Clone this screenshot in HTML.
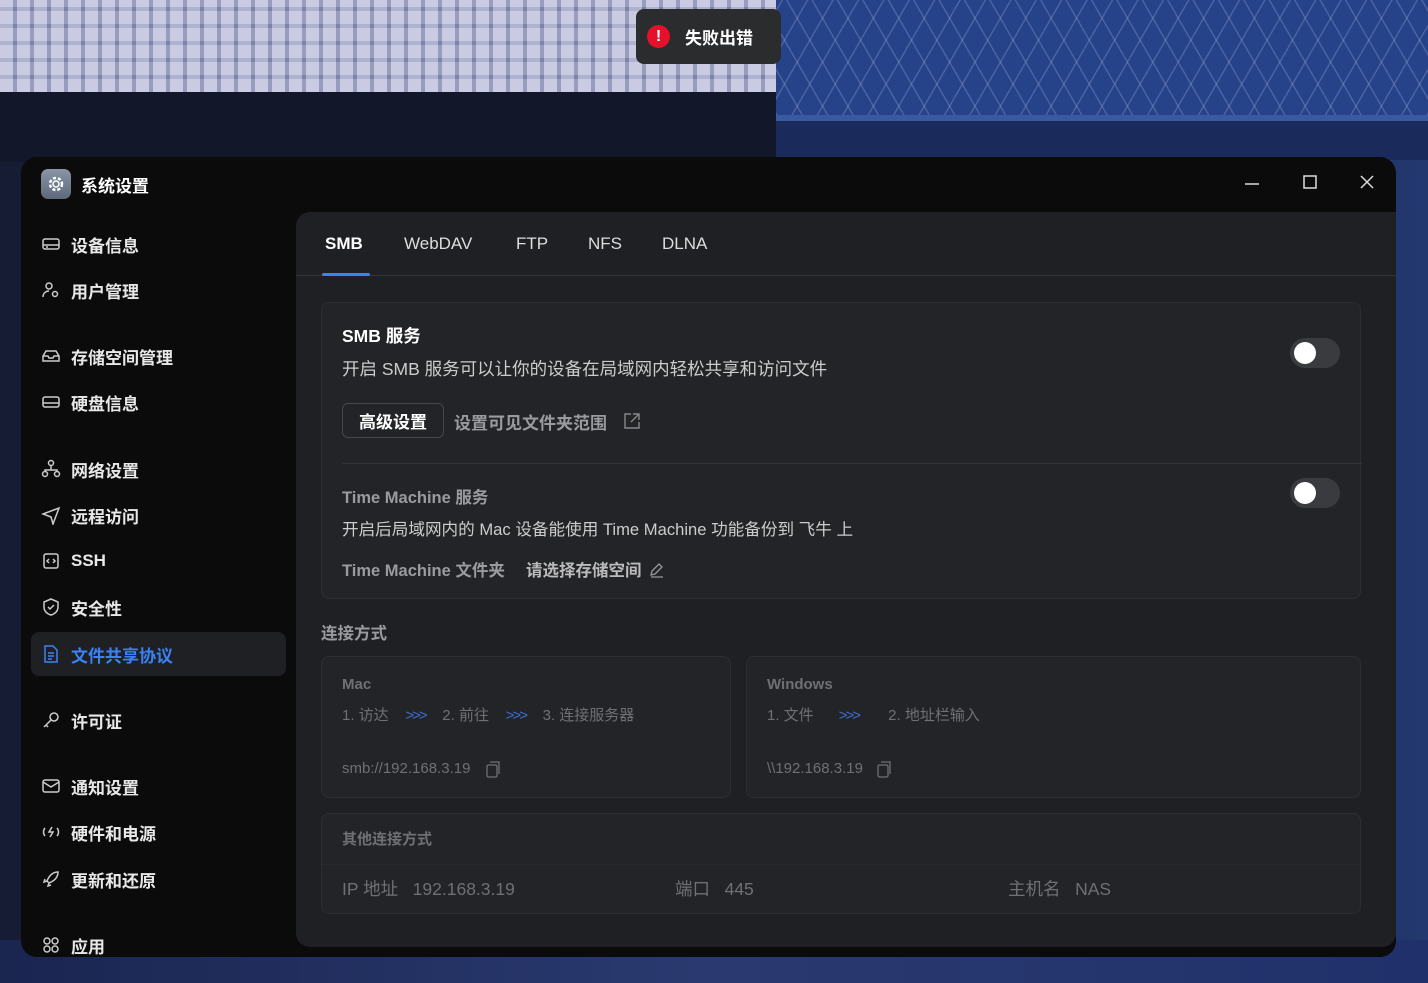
<!DOCTYPE html>
<html><head><meta charset="utf-8"><style>
*{box-sizing:border-box;margin:0;padding:0}
body{width:1428px;height:983px;overflow:hidden;position:relative;font-family:"Liberation Sans","Noto Sans CJK SC",sans-serif;
background:linear-gradient(90deg,#161c34 0,#1a2650 50%,#22386e 100%);}
.bgtop{position:absolute;left:0;top:0;width:776px;height:92px;background:repeating-linear-gradient(90deg,rgba(235,235,250,.35) 0 13px,rgba(90,100,140,.35) 13px 17px),repeating-linear-gradient(0deg,rgba(235,235,250,.25) 0 13px,rgba(90,100,140,.3) 13px 17px),#a8aacb}
.bgl{position:absolute;left:0;top:92px;width:776px;height:70px;background:#12172a}
.bgr{position:absolute;left:776px;top:0;width:652px;height:115px;background:repeating-linear-gradient(60deg,rgba(180,190,230,.25) 0 1.5px,transparent 1.5px 22px),repeating-linear-gradient(-60deg,rgba(180,190,230,.25) 0 1.5px,transparent 1.5px 22px),#26438a}
.bgr2{position:absolute;left:776px;top:115px;width:652px;height:45px;background:linear-gradient(#3a5aa0 0 6px,#1a2a5a 6px)}
.floor{position:absolute;left:0;top:940px;width:1428px;height:43px;background:linear-gradient(90deg,#1a2550,#2a3a70 50%,#20306a)}
.toast{position:absolute;left:636px;top:9px;width:145px;height:55px;background:#2b2c2e;border-radius:8px;display:flex;align-items:center;padding-left:11px;color:#fff;font-weight:bold;font-size:17px}
.toast .i{width:23px;height:23px;border-radius:50%;background:#e5112a;color:#fff;font-size:16px;display:flex;align-items:center;justify-content:center;margin-right:15px}
.win{position:absolute;left:21px;top:157px;width:1375px;height:800px;background:#0b0b0c;border-radius:16px;overflow:hidden}
.title{position:absolute;left:20px;top:12px;display:flex;align-items:center;color:#fff;font-weight:bold;font-size:17px}
.logo{width:30px;height:30px;border-radius:7px;background:linear-gradient(#8a96a8,#5d6878);margin-right:10px;display:flex;align-items:center;justify-content:center}
.ctl{position:absolute;top:16px;color:#ddd}
.nav{position:absolute;left:10px;width:255px;height:44px;display:flex;align-items:center;padding-left:10px;color:#e8e8e8;font-weight:bold;font-size:17px}
.nav svg{width:20px;height:20px;margin-right:10px;fill:none;stroke:#ccc;stroke-width:1.5}
.nav.a{background:#1e2024;border-radius:8px;color:#3b82f6}
.nav.a svg{stroke:#3b82f6}
.main{position:absolute;left:275px;top:55px;width:1100px;height:735px;background:#1f2023;border-radius:14px 0 14px 14px}
.tabs{height:64px;border-bottom:1px solid #34353a;position:relative}
.tab{position:absolute;top:22px;font-size:17px;color:#ddd}
.tab.a{color:#fff;font-weight:bold}
.ul{position:absolute;left:26px;top:61px;width:48px;height:3px;background:#3b82f6;border-radius:2px}
.card{position:absolute;background:#232427;border:1px solid #2d2e31;border-radius:8px}
.t{position:absolute;white-space:nowrap}
.sw{position:absolute;width:50px;height:30px;border-radius:15px;background:#3a3b3f}
.sw::after{content:"";position:absolute;left:4px;top:4px;width:22px;height:22px;border-radius:50%;background:#fff}
.g{color:#9a9ba0}.d{color:#6f7075}
.ar{color:#3b6fd0;letter-spacing:-2px}
</style></head><body>
<div class="bgtop"></div><div class="bgl"></div><div class="bgr"></div><div class="bgr2"></div><div class="floor"></div>
<div class="toast"><div class="i">!</div>失败出错</div>
<div class="win">
<div class="title"><div class="logo"><svg width="20" height="20" viewBox="0 0 20 20"><circle cx="10" cy="10" r="6" fill="none" stroke="#fff" stroke-width="2.5" stroke-dasharray="3 2"/><circle cx="10" cy="10" r="3" fill="none" stroke="#fff" stroke-width="1.5"/></svg></div>系统设置</div>
<svg class="ctl" style="left:1222px" width="18" height="18"><path d="M2 11h14" stroke="#ddd" stroke-width="1.5"/></svg>
<svg class="ctl" style="left:1280px" width="18" height="18"><rect x="3" y="3" width="12" height="12" fill="none" stroke="#ddd" stroke-width="1.5"/></svg>
<svg class="ctl" style="left:1337px" width="18" height="18"><path d="M3 3l12 12M15 3L3 15" stroke="#ddd" stroke-width="1.5"/></svg>

<div class="nav" style="top:65px"><svg viewBox="0 0 20 20"><rect x="2" y="5" width="16" height="10" rx="2"/><path d="M2 11h16M5 13h2"/></svg>设备信息</div>
<div class="nav" style="top:111px"><svg viewBox="0 0 20 20"><circle cx="8" cy="6" r="3"/><path d="M2 17c0-4 3-6 6-6"/><circle cx="14" cy="14" r="2.5"/></svg>用户管理</div>
<div class="nav" style="top:177px"><svg viewBox="0 0 20 20"><path d="M2 10l3-5h10l3 5v5H2z M2 10h5l1 2h4l1-2h5"/></svg>存储空间管理</div>
<div class="nav" style="top:223px"><svg viewBox="0 0 20 20"><rect x="2" y="5" width="16" height="10" rx="2"/><path d="M2 11h16"/></svg>硬盘信息</div>
<div class="nav" style="top:290px"><svg viewBox="0 0 20 20"><circle cx="10" cy="4" r="2.5"/><circle cx="4" cy="15" r="2.5"/><circle cx="16" cy="15" r="2.5"/><path d="M10 7v4M4 12v-1h12v1"/></svg>网络设置</div>
<div class="nav" style="top:336px"><svg viewBox="0 0 20 20"><path d="M2 9l16-6-6 16-2-7z"/></svg>远程访问</div>
<div class="nav" style="top:382px"><svg viewBox="0 0 20 20"><rect x="3" y="3" width="14" height="14" rx="2"/><path d="M8 8l-2 2 2 2M12 8l2 2-2 2"/></svg>SSH</div>
<div class="nav" style="top:428px"><svg viewBox="0 0 20 20"><path d="M10 2l7 3v5c0 4-3 7-7 8-4-1-7-4-7-8V5z"/><path d="M7 10l2 2 4-4"/></svg>安全性</div>
<div class="nav a" style="top:475px"><svg viewBox="0 0 20 20"><path d="M4 2h8l4 4v12H4z M7 9h6M7 12h6M7 15h4"/></svg>文件共享协议</div>
<div class="nav" style="top:541px"><svg viewBox="0 0 20 20"><circle cx="13" cy="7" r="4"/><path d="M10 10l-7 7M5 15l2 2"/></svg>许可证</div>
<div class="nav" style="top:607px"><svg viewBox="0 0 20 20"><rect x="2" y="4" width="16" height="12" rx="2"/><path d="M2 6l8 5 8-5"/></svg>通知设置</div>
<div class="nav" style="top:653px"><svg viewBox="0 0 20 20"><path d="M4 6c-2 2-2 6 0 8M16 6c2 2 2 6 0 8M11 5l-3 5h4l-3 5"/></svg>硬件和电源</div>
<div class="nav" style="top:700px"><svg viewBox="0 0 20 20"><path d="M17 3c-6 0-9 4-11 9l2 2c5-2 9-5 9-11zM6 12l-3 1 1-3M8 14l-1 3 3-1"/></svg>更新和还原</div>
<div class="nav" style="top:766px"><svg viewBox="0 0 20 20"><circle cx="6" cy="6" r="3"/><circle cx="14" cy="6" r="3"/><circle cx="6" cy="14" r="3"/><circle cx="14" cy="14" r="3"/></svg>应用</div>

<div class="main">
<div class="tabs">
<div class="tab a" style="left:29px">SMB</div>
<div class="tab" style="left:108px">WebDAV</div>
<div class="tab" style="left:220px">FTP</div>
<div class="tab" style="left:292px">NFS</div>
<div class="tab" style="left:366px">DLNA</div>
<div class="ul"></div>
</div>
<div class="card" style="left:25px;top:90px;width:1040px;height:297px">
<div class="t" style="left:20px;top:20px;color:#fff;font-weight:bold;font-size:17.5px">SMB 服务</div>
<div class="t" style="left:20px;top:53px;color:#ccc;font-size:17.5px">开启 SMB 服务可以让你的设备在局域网内轻松共享和访问文件</div>
<div class="sw" style="left:968px;top:35px"></div>
<div style="position:absolute;left:20px;top:100px;width:102px;height:35px;border:1px solid #46474c;border-radius:6px;color:#fff;font-weight:bold;font-size:17px;display:flex;align-items:center;justify-content:center">高级设置</div>
<div class="t g" style="left:132px;top:106px;font-weight:bold;font-size:17px">设置可见文件夹范围</div>
<svg style="position:absolute;left:301px;top:109px" width="18" height="18" fill="none" stroke="#888" stroke-width="1.4"><path d="M8 2H2v14h14v-6M10 2h6v6M16 2l-8 8"/></svg>
<div style="position:absolute;left:20px;top:160px;width:1020px;height:1px;background:#34353a"></div>
<div class="t g" style="left:20px;top:181px;font-size:16.5px;font-weight:bold">Time Machine 服务</div>
<div class="sw" style="left:968px;top:175px"></div>
<div class="t" style="left:20px;top:213px;color:#ccc;font-size:16.6px">开启后局域网内的 Mac 设备能使用 Time Machine 功能备份到 飞牛 上</div>
<div class="t g" style="left:20px;top:254px;font-size:16.5px;font-weight:bold">Time Machine 文件夹</div>
<div class="t" style="left:204px;top:254px;color:#bbb;font-size:16.5px;font-weight:bold">请选择存储空间</div>
<svg style="position:absolute;left:327px;top:259px" width="16" height="16" fill="none" stroke="#999" stroke-width="1.3"><path d="M2 13l1-4 7-7 3 3-7 7zM2 15h12"/></svg>
</div>
<div class="t g" style="left:25px;top:408px;font-size:16.5px;font-weight:bold">连接方式</div>
<div class="card" style="left:25px;top:444px;width:410px;height:142px">
<div class="t d" style="left:20px;top:19px;font-size:15px;font-weight:bold">Mac</div>
<div class="t d" style="left:20px;top:47px;font-size:15px">1. 访达 &nbsp;&nbsp;&nbsp;<span class="ar">&gt;&gt;&gt;</span>&nbsp;&nbsp;&nbsp; 2. 前往 &nbsp;&nbsp;&nbsp;<span class="ar">&gt;&gt;&gt;</span>&nbsp;&nbsp;&nbsp; 3. 连接服务器</div>
<div class="t d" style="left:20px;top:103px;font-size:15px">smb://192.168.3.19</div>
<svg style="position:absolute;left:163px;top:103px" width="18" height="18" fill="none" stroke="#6f7075" stroke-width="1.3"><rect x="2" y="5" width="10" height="12" rx="1.5"/><path d="M5 2h9v12"/></svg>
</div>
<div class="card" style="left:450px;top:444px;width:615px;height:142px">
<div class="t d" style="left:20px;top:19px;font-size:15px;font-weight:bold">Windows</div>
<div class="t d" style="left:20px;top:47px;font-size:15px">1. 文件 &nbsp;&nbsp;&nbsp;&nbsp;&nbsp;<span class="ar">&gt;&gt;&gt;</span>&nbsp;&nbsp;&nbsp;&nbsp;&nbsp;&nbsp; 2. 地址栏输入</div>
<div class="t d" style="left:20px;top:103px;font-size:15px">\\192.168.3.19</div>
<svg style="position:absolute;left:129px;top:103px" width="18" height="18" fill="none" stroke="#6f7075" stroke-width="1.3"><rect x="2" y="5" width="10" height="12" rx="1.5"/><path d="M5 2h9v12"/></svg>
</div>
<div class="card" style="left:25px;top:601px;width:1040px;height:101px">
<div class="t d" style="left:20px;top:14px;font-size:15px;font-weight:bold">其他连接方式</div>
<div style="position:absolute;left:0;top:50px;width:1038px;height:1px;background:#292a2d"></div>
<div class="t d" style="left:20px;top:62px;font-size:17.5px">IP 地址 &nbsp;&nbsp;192.168.3.19</div>
<div class="t d" style="left:353px;top:62px;font-size:17.5px">端口 &nbsp;&nbsp;445</div>
<div class="t d" style="left:686px;top:62px;font-size:17.5px">主机名 &nbsp;&nbsp;NAS</div>
</div>
</div>
</div>
</body></html>
